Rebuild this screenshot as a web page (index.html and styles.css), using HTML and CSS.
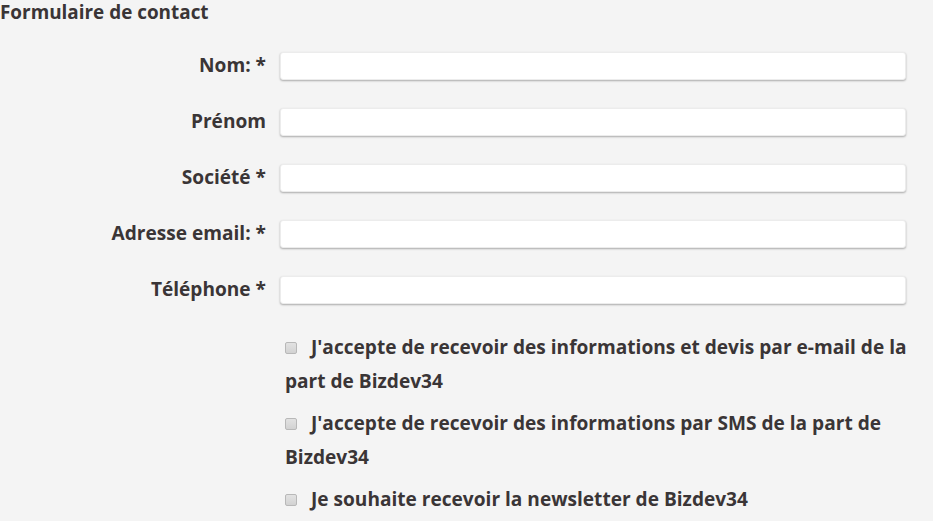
FILE: index.html
```html
<!DOCTYPE html>
<html lang="fr">
<head>
<meta charset="utf-8">
<title>Formulaire de contact</title>
<link rel="stylesheet" href="styles.css">
</head>
<body>
<form class="contact">
  <h3 class="title">Formulaire de contact</h3>
  <div class="fields">
    <label class="label" for="nom">Nom: *</label><input class="input" id="nom" type="text">
    <label class="label" for="prenom">Prénom</label><input class="input" id="prenom" type="text">
    <label class="label" for="societe">Société *</label><input class="input" id="societe" type="text">
    <label class="label" for="email">Adresse email: *</label><input class="input" id="email" type="text">
    <label class="label" for="tel">Téléphone *</label><input class="input" id="tel" type="text">
  </div>
  <div class="checks">
    <p class="check"><input type="checkbox" class="box"> J'accepte de recevoir des informations et devis par e-mail de la part de Bizdev34</p>
    <p class="check"><input type="checkbox" class="box"> J'accepte de recevoir des informations par SMS de la part de Bizdev34</p>
    <p class="check"><input type="checkbox" class="box"> Je souhaite recevoir la newsletter de Bizdev34</p>
  </div>
</form>
</body>
</html>
```
FILE: styles.css
```css
html, body {
  margin: 0;
  padding: 0;
  background: #f4f4f4;
}
body {
  font-family: "Open Sans", "DejaVu Sans", sans-serif;
  font-weight: 700;
  color: #3a3536;
}
.contact {
  width: 906px;
}
.title {
  margin: 0;
  font-size: 18.9px;
  line-height: 24px;
  height: 52px;
}
.fields {
  display: grid;
  grid-template-columns: 266px 626px;
  column-gap: 14px;
  row-gap: 28px;
  align-items: center;
}
.label {
  text-align: right;
  font-size: 19.1px;
  line-height: 24px;
  margin-top: -2px;
}
.input {
  box-sizing: border-box;
  height: 28px;
  margin: 0;
  border: 1px solid #ececec;
  border-radius: 3px;
  background: #fff;
  box-shadow: 0 1px 2px rgba(0,0,0,0.3);
}
.checks {
  margin: 26px -8px 0 285px;
}
.check {
  margin: 0 0 8px;
  font-size: 19.1px;
  line-height: 34px;
}
.box {
  -webkit-appearance: none;
  appearance: none;
  box-sizing: border-box;
  width: 12px;
  height: 12px;
  margin: 0 9px 0 0;
  border: 1px solid #b8b8b8;
  border-radius: 2px;
  background: linear-gradient(#e2e2e2, #d2d2d2);
  vertical-align: 0;
}
```
